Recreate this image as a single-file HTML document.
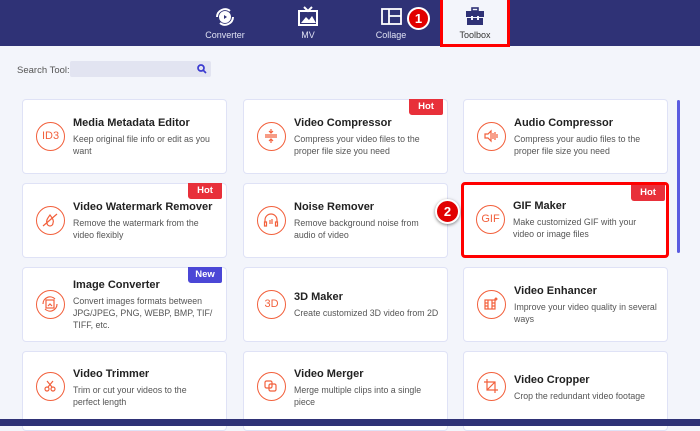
<!DOCTYPE html>
<html><head><meta charset="utf-8"><style>
*{margin:0;padding:0;box-sizing:border-box}
body{width:700px;height:426px;overflow:hidden;background:#f3f5fb;font-family:"Liberation Sans",Tahoma,sans-serif;position:relative}
.hdr{position:absolute;left:0;top:0;width:700px;height:46px;background:#2f3276}
.tab{position:absolute;top:0;width:70px;height:46px;text-align:center;color:#dfe1f3;font-size:9px}
.tab svg{position:absolute;left:23px;top:5px}
.tab span{position:absolute;left:0;right:0;top:30px}
.tb{position:absolute;left:440px;top:0;width:70px;height:47px;background:#f3f5fb;border:3px solid #f00;border-top:none}
.b1{position:absolute;left:407px;top:7px;width:23px;height:23px;border-radius:50%;background:#e10000;border:2px solid #fff;color:#fff;font-weight:bold;font-size:13px;text-align:center;line-height:19px}
.sl{position:absolute;left:17px;top:65px;font-size:9.5px;color:#555}
.si{position:absolute;left:70px;top:61px;width:141px;height:16px;background:#e2e4f1;border-radius:2px}
.card{position:absolute;width:205px;height:75px;background:#fff;border:1px solid #dfe2f6;border-radius:4px}
.ic{position:absolute;left:13px;top:22px;width:29px;height:29px;border:1.5px solid #f2603c;border-radius:50%;color:#f2603c;font-size:11px;text-align:center;line-height:26px}
.ic svg{position:absolute;left:5px;top:5px}
.t{position:absolute;left:50px;right:4px;top:50%;transform:translateY(-50%);white-space:nowrap}
.t b{display:block;font-size:11px;color:#222;margin-bottom:4px}
.t p{font-size:8.8px;line-height:12px;color:#555}
.hot,.new{position:absolute;right:4px;top:-1px;width:34px;height:16px;background:#e8303a;color:#fff;font-weight:bold;font-size:9.5px;text-align:center;line-height:16px;border-radius:0 0 2px 3px}
.new{background:#4b47d6}
.sel{border:3px solid #f00}
.b2{position:absolute;left:435px;top:199px;width:25px;height:25px;border-radius:50%;background:#e10000;border:2px solid #fff;box-shadow:0 1px 3px rgba(0,0,0,.5);color:#fff;font-weight:bold;font-size:13px;text-align:center;line-height:21px}
.sb{position:absolute;left:677px;top:100px;width:3px;height:153px;background:#5b5ce0;border-radius:2px}
.bot{position:absolute;left:0;top:419px;width:700px;height:7px;background:#2f3276}
</style></head><body>
<div class="hdr"></div>
<div class="tab" style="left:190px"><svg width="24" height="24" viewBox="0 0 24 24" fill="none" stroke="#fff" stroke-width="2"><path d="M4 12a8 8 0 0 1 13-6M20 12a8 8 0 0 1-13 6"/><circle cx="12" cy="12" r="5" fill="#fff"/><path d="M11 10l3 2-3 2z" fill="#2f3276" stroke="none"/></svg><span>Converter</span></div>
<div class="tab" style="left:273px"><svg width="24" height="24" viewBox="0 0 24 24" fill="none" stroke="#fff" stroke-width="2"><path d="M8 2l4 4 4-4"/><rect x="3" y="6" width="18" height="14"/><path d="M5 18l5-6 3 3 3-4 4 7z" fill="#fff" stroke="none"/></svg><span>MV</span></div>
<div class="tab" style="left:356px"><svg width="24" height="24" viewBox="0 0 24 24" fill="none" stroke="#fff" stroke-width="1.8"><rect x="3" y="4" width="19" height="15"/><path d="M10 4v15M10 11h12"/></svg><span>Collage</span></div>
<div class="tb"></div>
<div class="tab" style="left:440px;color:#333"><svg width="24" height="24" viewBox="0 0 24 24" fill="#2f3276"><rect x="9" y="3" width="6" height="3" fill="none" stroke="#2f3276" stroke-width="1.6"/><rect x="3" y="6" width="18" height="6"/><rect x="4" y="13" width="16" height="7"/><rect x="8" y="11" width="2" height="4" fill="#f3f5fb"/><rect x="14" y="11" width="2" height="4" fill="#f3f5fb"/></svg><span>Toolbox</span></div>
<div class="b1">1</div>
<div class="sl">Search Tool:</div>
<div class="si"><svg style="position:absolute;right:4px;top:3px" width="10" height="10" viewBox="0 0 10 10" fill="none" stroke="#3b3bd0" stroke-width="1.7"><circle cx="4" cy="4" r="3"/><path d="M6.5 6.5L9 9"/></svg></div>

<div class="card" style="left:22px;top:99px"><div class="ic">ID3</div><div class="t"><b>Media Metadata Editor</b><p>Keep original file info or edit as you<br>want</p></div></div>
<div class="card" style="left:243px;top:99px"><div class="hot">Hot</div><div class="ic"><svg width="16" height="16" viewBox="0 0 16 16" fill="none" stroke="#f2603c" stroke-width="1.2"><path d="M2 7h12M2 9h12M8 1v4M6 3l2 2 2-2M8 15v-4M6 13l2-2 2 2"/></svg></div><div class="t"><b>Video Compressor</b><p>Compress your video files to the<br>proper file size you need</p></div></div>
<div class="card" style="left:463px;top:99px"><div class="ic"><svg width="16" height="16" viewBox="0 0 16 16" fill="none" stroke="#f2603c" stroke-width="1.2"><path d="M2 6h3l3-3v10l-3-3H2zM10 5v6M12 4v8M14 6v4"/></svg></div><div class="t"><b>Audio Compressor</b><p>Compress your audio files to the<br>proper file size you need</p></div></div>

<div class="card" style="left:22px;top:183px"><div class="hot">Hot</div><div class="ic"><svg width="16" height="16" viewBox="0 0 16 16" fill="none" stroke="#f2603c" stroke-width="1.2"><path d="M8 3c-3 4-4 6-3 8a3 3 0 0 0 6 0c1-2 0-4-3-8zM1 14L15 2"/></svg></div><div class="t"><b>Video Watermark Remover</b><p>Remove the watermark from the<br>video flexibly</p></div></div>
<div class="card" style="left:243px;top:183px"><div class="ic"><svg width="16" height="16" viewBox="0 0 16 16" fill="none" stroke="#f2603c" stroke-width="1.2"><path d="M2 10V8a6 6 0 0 1 12 0v2M1.5 10h2v4h-2zM12.5 10h2v4h-2zM7 8v4M9 7v5"/></svg></div><div class="t"><b>Noise Remover</b><p>Remove background noise from<br>audio of video</p></div></div>
<div class="card sel" style="left:461px;top:182px;width:208px;height:76px"><div class="hot" style="right:1px;top:0">Hot</div><div class="ic" style="left:12px;top:20px">GIF</div><div class="t" style="left:49px"><b>GIF Maker</b><p>Make customized GIF with your<br>video or image files</p></div></div>
<div class="b2">2</div>

<div class="card" style="left:22px;top:267px"><div class="new">New</div><div class="ic"><svg width="16" height="16" viewBox="0 0 16 16" fill="none" stroke="#f2603c" stroke-width="1.2"><rect x="4" y="4" width="8" height="8"/><path d="M1 8a7 7 0 0 1 12-5M15 8a7 7 0 0 1-12 5M6 10l2-2 2 2"/></svg></div><div class="t"><b>Image Converter</b><p>Convert images formats between<br>JPG/JPEG, PNG, WEBP, BMP, TIF/<br>TIFF, etc.</p></div></div>
<div class="card" style="left:243px;top:267px"><div class="ic">3D</div><div class="t"><b>3D Maker</b><p>Create customized 3D video from 2D</p></div></div>
<div class="card" style="left:463px;top:267px"><div class="ic"><svg width="16" height="16" viewBox="0 0 16 16" fill="none" stroke="#f2603c" stroke-width="1.2"><rect x="2" y="4" width="10" height="9"/><path d="M5 4v9M9 4v9M2 7h3M2 10h3M9 7h3M9 10h3M13 2l1 1-1 1-1-1z"/></svg></div><div class="t"><b>Video Enhancer</b><p>Improve your video quality in several<br>ways</p></div></div>

<div class="card" style="left:22px;top:351px;height:80px"><div class="ic" style="top:20px"><svg width="16" height="16" viewBox="0 0 16 16" fill="none" stroke="#f2603c" stroke-width="1.2"><circle cx="5" cy="11" r="2"/><circle cx="11" cy="11" r="2"/><path d="M6 9L11 3M10 9L5 3"/></svg></div><div class="t" style="top:36px"><b>Video Trimmer</b><p>Trim or cut your videos to the<br>perfect length</p></div></div>
<div class="card" style="left:243px;top:351px;height:80px"><div class="ic" style="top:20px"><svg width="16" height="16" viewBox="0 0 16 16" fill="none" stroke="#f2603c" stroke-width="1.2"><rect x="2" y="3" width="7" height="7" rx="1.5"/><rect x="6" y="6" width="7" height="7" rx="1.5"/></svg></div><div class="t" style="top:36px"><b>Video Merger</b><p>Merge multiple clips into a single<br>piece</p></div></div>
<div class="card" style="left:463px;top:351px;height:80px"><div class="ic" style="top:20px"><svg width="16" height="16" viewBox="0 0 16 16" fill="none" stroke="#f2603c" stroke-width="1.2"><path d="M4 1v11h11M1 4h11v11M4 12L12 4"/></svg></div><div class="t" style="top:36px"><b>Video Cropper</b><p>Crop the redundant video footage</p></div></div>

<div class="sb"></div>
<div class="bot"></div>
</body></html>
